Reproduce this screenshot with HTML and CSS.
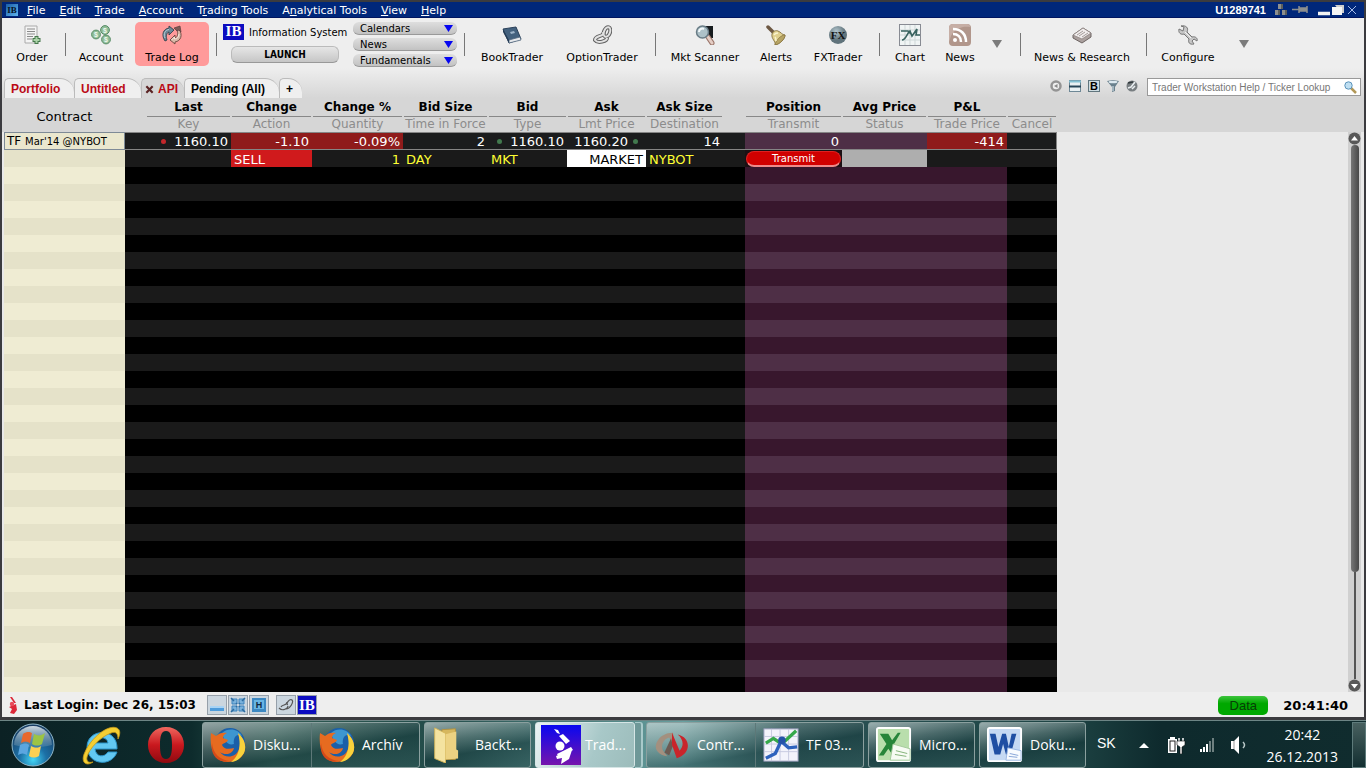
FILE: index.html
```html
<!DOCTYPE html>
<html lang="en">
<head>
<meta charset="utf-8">
<title>Trader Workstation</title>
<link rel="stylesheet" href="styles.css">
</head>
<body>
<div class="window">
  <header class="menubar">
    <svg class="app-icon" viewBox="0 0 12 12"><defs><linearGradient id="ap" x2="1" y2="1"><stop stop-color="#1b5ea8"/><stop offset="1" stop-color="#5fb4ee"/></linearGradient></defs><rect width="12" height="12" fill="url(#ap)"/><text x="6" y="9" text-anchor="middle" font-family="Liberation Serif, serif" font-weight="bold" font-size="9" fill="#061325">IB</text></svg>
    <nav class="menus">
      <a href="#"><u>F</u>ile</a><a href="#"><u>E</u>dit</a><a href="#"><u>T</u>rade</a><a href="#"><u>A</u>ccount</a><a href="#">T<u>r</u>ading Tools</a><a href="#">A<u>n</u>alytical Tools</a><a href="#"><u>V</u>iew</a><a href="#"><u>H</u>elp</a>
    </nav>
    <span class="user">U1289741</span>
    <svg class="tray-ic" viewBox="0 0 36 14"><g fill="#8d8f8e"><rect x="4" y="1" width="5" height="5"/><rect x="1" y="7" width="5" height="5"/><rect x="8" y="7" width="5" height="5"/></g><g fill="#5d5f5c"><rect x="7" y="1" width="2" height="5"/><rect x="4" y="7" width="2" height="5"/><rect x="11" y="7" width="2" height="5"/></g><path d="M18 6.500h7M25 3v7M26 5h6v3h-6zM33 3v7" stroke="#8d8f8e" stroke-width="1.500" fill="#8d8f8e"/></svg>
    <button class="winbtn" aria-label="Minimize"><svg viewBox="0 0 12 12"><path d="M0 9.500h12" stroke="#f2f2f2" stroke-width="3.500"/></svg></button>
    <button class="winbtn" aria-label="Restore"><svg viewBox="0 0 12 12"><path d="M3 1h9v8H9" fill="#ccc"/><rect x="0" y="3" width="10" height="8" fill="#f5f5f5"/></svg></button>
    <button class="winbtn" aria-label="Close"><svg viewBox="0 0 12 12"><path d="M2 2l8 8M10 2l-8 8" stroke="#a5bbe6" stroke-width="1"/></svg></button>
  </header>

  <div class="toolbar">
    <button class="tool"><svg viewBox="0 0 20 20"><path d="M3 1h12v17H3z" fill="#f4f4f4" stroke="#aaa"/><path d="M5 4h8M5 6.500h8M5 9h8M5 11.500h6M5 14h5" stroke="#8a8a8a"/><path d="M14.500 11v8M10.500 15h8" stroke="#46784c" stroke-width="4"/><path d="M14.500 12v6M11.500 15h6" stroke="#abd3a8" stroke-width="2"/></svg><span>Order</span></button>
    <i class="sep"></i>
    <button class="tool"><svg viewBox="0 0 20 20"><g fill="#90bd98" stroke="#568b65"><circle cx="5" cy="9.500" r="4.400"/><circle cx="14" cy="5" r="4.400"/><circle cx="15" cy="14.500" r="4.400"/></g><g font-family="Liberation Sans, sans-serif" font-size="7" font-weight="bold" fill="#eef8ef" text-anchor="middle"><text x="5" y="12">$</text><text x="14" y="7.500">$</text><text x="15" y="17">$</text></g></svg><span>Account</span></button>
    <button class="tool active"><svg viewBox="0 0 20 20"><path d="M3 16C-1 10 1 4 7 3l0-2 5 4-5 5V7C4 8 4 12 5 15z" fill="#6b8796" stroke="#35424d" stroke-width=".9"/><path d="M3 13C1 9 3 5 7 4.500" fill="none" stroke="#b9d0da"/><path d="M17 4c4 6 2 12-4 13v2l-5-4 5-5v3c3-1 3-5 2-8z" fill="#d9b9a8" stroke="#69463f" stroke-width=".9"/><path d="M12 3l6-2 1 6-2-2-2 1z" fill="#7e5a57" stroke="#5b3b3b" stroke-width=".7"/><path d="M9.500 15l3-3v2c3 0 4-2 4.500-5" fill="none" stroke="#f6e9df"/></svg><span>Trade Log</span></button>
    <i class="sep"></i>
    <div class="info">
      <div class="info-title"><b class="ib">IB</b><span>Information System</span></div>
      <button class="launch">LAUNCH</button>
    </div>
    <div class="drops">
      <div class="drop"><select aria-label="Calendars"><option>Calendars</option></select></div>
      <div class="drop"><select aria-label="News"><option>News</option></select></div>
      <div class="drop"><select aria-label="Fundamentals"><option>Fundamentals</option></select></div>
    </div>
    <i class="sep"></i>
    <button class="tool"><svg viewBox="0 0 20 20"><path d="M1 4l13-2 5 12-12 4z" fill="#43617e" stroke="#2a4059"/><path d="M7 15l11-3 1 3-12 3z" fill="#e7e9ec" stroke="#52677d" stroke-width=".8"/><path d="M1 4l6 11v3L1 7z" fill="#243c56"/><path d="M8 7l4-1 1 2-4 1z" fill="#9eb4c9"/></svg><span>BookTrader</span></button>
    <button class="tool"><svg viewBox="0 0 20 20"><g fill="none" stroke="#636363" stroke-width="4"><ellipse cx="15" cy="7" rx="3" ry="5" transform="rotate(20 15 7)"/><path d="M11 7c2 5-8 3-8 8 3 4 12 1 12-2"/></g><g fill="none" stroke="#e2e2e2" stroke-width="2"><ellipse cx="15" cy="7" rx="3" ry="5" transform="rotate(20 15 7)"/><path d="M11 7c2 5-8 3-8 8 3 4 12 1 12-2"/></g></svg><span>OptionTrader</span></button>
    <i class="sep"></i>
    <button class="tool"><svg viewBox="0 0 20 20"><path d="M10 1h8v12h-6z" fill="#161b1e"/><path d="M13 12l4 6" stroke="#9a7569" stroke-width="5" stroke-linecap="round"/><path d="M13 12l4 6" stroke="#e4cdc4" stroke-width="3" stroke-linecap="round"/><circle cx="7.500" cy="7" r="6" fill="#adc1c8" stroke="#697c86" stroke-width="1.500"/><path d="M4 7c0-3 3-4 5-3" stroke="#f2f8fa" stroke-width="2" fill="none"/></svg><span>Mkt Scanner</span></button>
    <button class="tool"><svg viewBox="0 0 20 20"><path d="M2 2l5 5" stroke="#6d5843" stroke-width="3.500" stroke-linecap="round"/><path d="M6 9c1-3 4-4 6-3 3 1 4 4 7 4 0 4-5 9-10 10 1-4-4-6-3-11z" fill="#e0d08f" stroke="#84713e" stroke-width=".9"/><path d="M19 10c-4 0-9 5-10 10 5-1 10-6 10-10z" fill="#b7a464" stroke="#84713e" stroke-width=".7"/><path d="M8 10c1-2 2-2 4-2M9 12c1 1 1 2 1 4" stroke="#faf4cf" stroke-width="1.500" fill="none"/></svg><span>Alerts</span></button>
    <button class="tool"><svg viewBox="0 0 20 20"><defs><radialGradient id="fx" cx=".4" cy=".3"><stop stop-color="#b3c6ce"/><stop offset="1" stop-color="#60737b"/></radialGradient></defs><circle cx="10" cy="10" r="9" fill="url(#fx)"/><text x="10" y="14" text-anchor="middle" font-family="Liberation Serif, serif" font-weight="bold" font-size="11" fill="#111">FX</text></svg><span>FXTrader</span></button>
    <i class="sep"></i>
    <button class="tool"><svg class="big" viewBox="0 0 22 22"><rect x=".5" y=".5" width="21" height="21" fill="#f0f4f4" stroke="#888b93"/><path d="M1 6h20M1 11h20M1 16h20M6 1v20M11 1v20M16 1v20" stroke="#ced7d7"/><path d="M2 7h7l3 3M3 16c4 0 5-7 8-9l2 5 5-7-1 6h4" stroke="#39635f" stroke-width="1.600" fill="none"/></svg><span>Chart</span></button>
    <button class="tool"><svg class="big" viewBox="0 0 22 22"><rect width="22" height="22" rx="4" fill="#b1968b"/><path d="M2 12C6 4 14 2 21 3v-1c0-1-1-2-3-2H4C1 0 0 2 0 4v14z" fill="#c6aea5"/><circle cx="6" cy="16" r="2" fill="#fff"/><path d="M4 10c5 0 8 3 8 8M4 5c8 0 13 5 13 13" stroke="#fff" stroke-width="2.500" fill="none"/></svg><span>News</span></button>
    <button class="more" aria-label="More news tools"></button>
    <i class="sep"></i>
    <button class="tool"><svg viewBox="0 0 20 20"><path d="M1 10l10-7 8 5v4l-9 6-9-5z" fill="#aaa09e" stroke="#6d6462"/><path d="M1 10l10-7 8 5-9 6z" fill="#f1eded" stroke="#867c7a" stroke-width=".7"/><path d="M5 10l6-4M7 11l6-4M10 12l6-4" stroke="#a39b99"/></svg><span>News &amp; Research</span></button>
    <i class="sep"></i>
    <button class="tool"><svg viewBox="0 0 20 20"><path d="M1 4l4 2 1-4-3-1c5-1 8 2 6 6l5 5c4-1 6 2 5 4l-3-2-2 2 2 3c-5 1-6-2-5-5L6 9C3 10 0 8 1 4z" fill="#c7c7c7" stroke="#767676"/><path d="M7 7l6 6" stroke="#f3f3f3"/></svg><span>Configure</span></button>
    <button class="more" aria-label="More settings"></button>
  </div>

  <div class="tabrow">
    <nav class="tabs">
      <a class="tab t1" href="#">Portfolio</a><a class="tab t2" href="#">Untitled</a><a class="tab t3" href="#"><svg viewBox="0 0 10 10"><path d="M1.500 1.500l7 7M8.500 1.500l-7 7" stroke="#5a2323" stroke-width="2.400"/></svg>API</a><a class="tab t4" href="#">Pending (All)</a><a class="tab t5" href="#">+</a>
    </nav>
    <div class="tab-tools">
      <svg viewBox="0 0 12 12"><circle cx="6" cy="6" r="4.500" fill="#eee" stroke="#949494" stroke-width="2.500"/><path d="M7.500 4v4L4 6z" fill="#888"/></svg>
      <svg viewBox="0 0 12 12"><rect x=".5" y=".5" width="11" height="11" fill="#e9f0f2" stroke="#6e8896"/><path d="M0 1.500h12" stroke="#84c0d2" stroke-width="2"/><path d="M0 6.500h12" stroke="#284658" stroke-width="2"/></svg>
      <svg viewBox="0 0 12 12"><rect x=".5" y=".5" width="11" height="11" fill="#cfdde2" stroke="#61767e"/><text x="6" y="10" text-anchor="middle" font-family="Liberation Sans, sans-serif" font-size="11" font-weight="bold" fill="#000">B</text></svg>
      <svg viewBox="0 0 12 12"><path d="M0 1l6-1 6 1-4 6v4l-3 1V7z" fill="#69808d"/><ellipse cx="6" cy="2" rx="4.500" ry="1.300" fill="#dce8ef"/><path d="M6 6v5" stroke="#dce8ef"/></svg>
      <svg viewBox="0 0 12 12"><circle cx="6" cy="6" r="5.500" fill="#777d80"/><path d="M2 8l3-1 4-5M6 9l3-3" stroke="#e9eef0" stroke-width="1.600" fill="none"/><path d="M2 3l5-1" stroke="#30383c" stroke-width="1.500"/></svg>
    </div>
    <div class="search"><input type="text" aria-label="Help and ticker lookup" placeholder="Trader Workstation Help / Ticker Lookup"><svg viewBox="0 0 13 13"><path d="M7 7l5 5" stroke="#b29858" stroke-width="2.500"/><circle cx="4.500" cy="4.500" r="3.700" fill="#bfdff2" stroke="#5b93ba"/></svg></div>
  </div>

  <main class="board">
    <div class="grid">
      <table>
        <colgroup><col class="c-name"><col class="c-gap"><col class="c85"><col class="c-chg"><col class="c-pct"><col class="c85"><col class="c79"><col class="c79"><col class="c-asz"><col class="c-gap2"><col class="c-pos"><col class="c85"><col class="c-pnl"><col class="c-cxl"></colgroup>
        <thead>
          <tr class="h1"><th rowspan="2" class="contract">Contract</th><td></td><th><span>Last</span></th><th><span>Change</span></th><th><span>Change %</span></th><th><span>Bid Size</span></th><th><span>Bid</span></th><th><span>Ask</span></th><th><span>Ask Size</span></th><td></td><th><span>Position</span></th><th><span>Avg Price</span></th><th><span>P&amp;L</span></th><th><span>&nbsp;</span></th></tr>
          <tr class="h2"><td></td><th>Key</th><th>Action</th><th>Quantity</th><th>Time in Force</th><th>Type</th><th>Lmt Price</th><th>Destination</th><td></td><th>Transmit</th><th>Status</th><th>Trade Price</th><th>Cancel</th></tr>
        </thead>
        <tbody>
          <tr class="quote"><th class="name" scope="row">TF <small>Mar'14 @NYBOT</small></th><td></td><td><i class="dot red"></i>1160.10</td><td class="loss">-1.10</td><td class="loss">-0.09%</td><td>2</td><td><i class="dot green"></i>1160.10</td><td>1160.20<i class="dot green after"></i></td><td>14</td><td></td><td class="plum">0</td><td class="plum"></td><td class="loss">-414</td><td class="last"></td></tr>
          <tr class="order"><th class="name alt"></th><td></td><td></td><td class="sell">SELL</td><td class="num">1</td><td>DAY</td><td>MKT</td><td class="market num">MARKET</td><td>NYBOT</td><td></td><td class="send"><button class="transmit">Transmit</button></td><td class="status"></td><td></td><td></td></tr>
        </tbody>
      </table>
      <div class="filler"><div class="s-cream"></div><div class="s-dark"></div><div class="s-plum"></div><div class="s-dark"></div></div>
    </div>
    <div class="scroll">
      <svg viewBox="0 0 13 13"><circle cx="6.500" cy="6.500" r="6" fill="#585858"/><path d="M3 8.500h7L6.500 4z" fill="#fff"/></svg>
      <div class="track"><div class="thumb"></div><div class="rail"></div></div>
      <svg viewBox="0 0 13 13"><circle cx="6.500" cy="6.500" r="6" fill="#585858"/><path d="M3 5h7L6.500 9.500z" fill="#fff"/></svg>
    </div>
  </main>

  <footer class="statusbar">
    <svg class="mark" viewBox="0 0 9 17"><path d="M1 0l2 0 4 6-2 0zM0 10l7-3 1 6-3 4-4-1 2-4z" fill="#dc2738"/><circle cx="3" cy="7" r="2.200" fill="#e8495a"/></svg>
    <b class="login">Last Login: Dec 26, 15:03</b>
    <div class="sbtns">
      <button aria-label="Minimize windows"><svg viewBox="0 0 16 16"><path d="M1 10h14v4H1z" fill="#4e9cdb"/><path d="M1 10h14" stroke="#a8d3f4" stroke-width="2"/></svg></button>
      <button aria-label="Arrange windows"><svg viewBox="0 0 16 16"><g stroke="#3c83bd" stroke-width="1" fill="#7ab2dc"><path d="M2 2h5v5H2zM9 2h5v5H9zM2 9h5v5H2zM9 9h5v5H9z"/></g><path d="M1 1l3 3M15 1l-3 3M1 15l3-3M15 15l-3-3M6 6l1 1M10 6L9 7M6 10l1-1M10 10L9 9" stroke="#2b6ba0" stroke-width="1.500"/></svg></button>
      <button aria-label="Hide windows"><svg viewBox="0 0 16 16"><rect x="1" y="1" width="14" height="14" fill="#3c88c2"/><rect x="3" y="3" width="10" height="9" fill="#68b5e3"/><text x="8" y="11" text-anchor="middle" font-family="Liberation Sans, sans-serif" font-size="9" font-weight="bold" fill="#102840">H</text></svg></button>
      <button class="gap" aria-label="Windows groups"><svg viewBox="0 0 16 16"><path d="M1 11c4 4 9 0 9-2M3 10c1-3 6-1 6-5M10 8c-3-1 2-7 4-5s-2 9-6 9" fill="none" stroke="#555" stroke-width="1.200"/></svg></button>
      <button class="ib" aria-label="Information system">IB</button>
    </div>
    <button class="data">Data</button>
    <b class="time">20:41:40</b>
  </footer>
</div>

<footer class="taskbar">
  <button class="pin orb" aria-label="Start"><svg viewBox="0 0 44 44"><defs><radialGradient id="orb" cx=".5" cy=".85" r=".8"><stop stop-color="#43d5f5"/><stop offset=".4" stop-color="#1c70a6"/><stop offset="1" stop-color="#183d63"/></radialGradient><linearGradient id="gl" x2="0" y2="1"><stop stop-color="#e2ebef" stop-opacity=".9"/><stop offset="1" stop-color="#7d9fb5" stop-opacity=".3"/></linearGradient></defs><circle cx="22" cy="22" r="21" fill="url(#orb)" stroke="#8fb6c8"/><path d="M3 22a19 19 0 0 1 38 0c-12 3-26 3-38 0z" fill="url(#gl)"/><path d="M12 11c4-3 7-2 9-1l-2 10c-3-2-6-2-9 0z" fill="#e8682c"/><path d="M23 11c4 2 7 2 11-1l-3 11c-3 2-7 2-10 0z" fill="#9cc444"/><path d="M9 22c4-2 7-2 9 0l-2 10c-3-2-6-2-9 0z" fill="#5ba6e0"/><path d="M20 23c4 2 7 2 10 0l-2 10c-4 2-7 2-10 0z" fill="#fbd052"/></svg></button>
  <button class="pin ie" aria-label="Internet Explorer"><svg viewBox="0 0 40 40"><path d="M36 24H14c1 8 9 9 13 3h9c-5 15-29 14-30-5C6 3 37 2 36 24zM14 18h13c-1-7-11-7-13 0z" fill="#62c8f2" stroke="#2a93c8"/><path d="M12 37C5 42-1 37 4 27 10 13 27-1 36 3c4 2 3 7 1 11 0-5-2-8-7-6C19 12 8 24 6 32c-1 5 2 6 6 5z" fill="#f4ce32" stroke="#c99a17" stroke-width=".8"/></svg></button>
  <button class="pin opera" aria-label="Opera"><svg viewBox="0 0 38 38"><defs><linearGradient id="op" x2="0" y2="1"><stop stop-color="#f0685f"/><stop offset=".5" stop-color="#c9181e"/><stop offset="1" stop-color="#8d0a10"/></linearGradient></defs><path fill-rule="evenodd" d="M19 1c11 0 18 8 18 18s-7 18-18 18S1 29 1 19 8 1 19 1zm0 4c-5 0-6 6-6 14s1 14 6 14 6-6 6-14-1-14-6-14z" fill="url(#op)"/></svg></button>

  <div class="group pair"><button class="task"><svg viewBox="0 0 36 36"><use href="#fox"/></svg><span>Disku...</span></button><button class="task"><svg viewBox="0 0 36 36"><g id="fox"><circle cx="20" cy="16" r="15" fill="#1b5fa8"/><path d="M12 6c6-6 17-4 20 3-7-4-9 4-8 8-6 2-10-3-12-11z" fill="#3d96d0"/><path d="M1 6l5 3c3-3 7-4 11-3-3 1-4 3-4 5l5 2c-1 3-5 3-6 5 2 5 8 4 12 3-1 6-9 8-14 4 5 7 16 6 19-3 2-6 1-11-1-15 6 4 9 12 6 19-3 6-9 9-16 9C6 35-1 24 1 6z" fill="#e66b20"/><path d="M28 6c6 5 9 13 6 20-3 5-8 9-13 9 7-5 11-15 7-29z" fill="#f8d23c"/><path d="M2 16c1 11 8 17 18 18C9 37 0 29 2 16z" fill="#d64a18"/></g></svg><span>Archív</span></button></div>
  <div class="group"><button class="task folder"><svg viewBox="0 0 36 40"><path d="M9 3l15-1v34H9z" fill="#d6b75e" stroke="#b3913c"/><path d="M1 1l12 6v33L1 35z" fill="#f4e3a0" stroke="#d4b658"/><path d="M13 8l12-3v20l2 1v9l-14 1z" fill="#ecd282"/></svg><span>Backt...</span></button></div>
  <div class="group on"><button class="task"><svg viewBox="0 0 40 40"><defs><linearGradient id="tw" x2="0" y2="1"><stop stop-color="#0808f0"/><stop offset="1" stop-color="#7614ac"/></linearGradient></defs><rect width="40" height="40" fill="url(#tw)"/><path d="M13 4l4 1 2 4-3-1zM18 11l4-2 7 7-4 3z" fill="#fff"/><path d="M15 31l16-6-3 9-8 5 1-6-5 1z" fill="#fff"/><path d="M16 29l14-7 2 3-14 8z" fill="#fff"/><circle cx="19" cy="21" r="4.500" fill="#fff"/></svg><span>Trad...</span></button></div>
  <i class="stack"></i>
  <div class="group pair"><button class="task"><svg viewBox="0 0 38 38"><path d="M14 31C5 30 1 24 2 19 4 11 11 6 20 6l3 18-7-13c-7 2-10 10-5 16z" fill="#a3907f"/><path d="M11 27l7-15 2 8-4 10z" fill="#6c5a52"/><path d="M19 6l8 19c5-5 4-12-2-17 14 3 15 20-1 25l-5-14z" fill="#c9252b"/></svg><span>Contr...</span></button><button class="task"><svg viewBox="0 0 38 38"><rect x="1" y="2" width="36" height="34" fill="#f3f3fb" stroke="#9fa2c2"/><path d="M1 10h36M1 18h36M1 26h36M9 2v34M18 2v34M27 2v34" stroke="#c7c9df"/><path d="M3 17l8-5 6 4 6-1 12-11" stroke="#36a84b" stroke-width="3.500" fill="none"/><path d="M3 33l10-5 6-13 8 7 9-1" stroke="#2e62bd" stroke-width="3.500" fill="none"/><circle cx="20" cy="14" r="4" fill="#2552a8"/></svg><span>TF 03...</span></button></div>
  <div class="group"><button class="task"><svg viewBox="0 0 38 38"><rect x="1" y="1" width="35" height="35" rx="2" fill="#b9deac" stroke="#fff" stroke-width="2"/><path d="M4 7h9l4 7 6-8h3l-7 12 8 12h-9l-5-7-5 7H3l8-12z" fill="#27853a"/><path d="M18 18l18 5v12H15z" fill="#f7fbf4" stroke="#a3c99a"/><path d="M21 25l12 3M20 29l12 2" stroke="#7fb074"/></svg><span>Micro...</span></button></div>
  <div class="group"><button class="task"><svg viewBox="0 0 38 38"><rect x="1" y="1" width="35" height="35" rx="2" fill="#c5d9f3" stroke="#fff" stroke-width="2"/><path d="M3 7h6l3 14 4-14h4l3 14 3-14h5l-6 22h-5l-3-11-3 11H8z" fill="#1f4fa3"/><path d="M22 22l14 3v10H20z" fill="#f8fbff" stroke="#9bb8e4"/><path d="M24 28l9 2M23 31l9 1" stroke="#83a2d6"/></svg><span>Doku...</span></button></div>

  <div class="tray">
    <span class="lang">SK</span>
    <svg class="up" viewBox="0 0 10 6"><path d="M0 6l5-5 5 5z" fill="#fff"/></svg>
    <svg class="bat" viewBox="0 0 20 18"><path d="M3 1h5v2h2v14H1V3h2z" fill="#fff"/><rect x="3" y="5" width="5" height="10" fill="#fff" stroke="#222"/><path d="M12 2v4M16 2v4" stroke="#fff" stroke-width="1.500"/><path d="M10 5h8v4l-3 2v7h-2v-7l-3-2z" fill="#fff" stroke="#111" stroke-width=".6"/></svg>
    <svg class="sig" viewBox="0 0 16 16"><path d="M1 12h2v3H1zM4 10h2v5H4zM7 7h2v8H7z" fill="#fff"/><path d="M10 4h2v11h-2zM13 1h2v14h-2z" fill="#6e8080"/></svg>
    <svg class="vol" viewBox="0 0 16 18"><path d="M1 5h3l5-5v18l-5-5H1z" fill="#fff"/><path d="M4 5v8" stroke="#999"/><path d="M13 6c2 2 2 4 0 6" stroke="#b9c8c8" stroke-width="1.500" fill="none"/></svg>
    <div class="clock"><span>20:42</span><span>26.12.2013</span></div>
    <button class="peek" aria-label="Show desktop"></button>
  </div>
</footer>
</body>
</html>
```
FILE: styles.css
```css
* { box-sizing: border-box; }

body {
  margin: 0;
  height: 100vh;
  display: flex;
  flex-direction: column;
  overflow: hidden;
  background: #3b3b3f;
  font-family: "DejaVu Sans", Verdana, sans-serif;
  font-size: 11px;
  color: #000;
}

button, select, input { font-family: inherit; color: inherit; margin: 0; padding: 0; border: 0; background: none; }
svg { display: block; flex: none; }
a { color: inherit; text-decoration: none; }

.window {
  flex: 1;
  min-height: 0;
  margin: 2px 2px 3px;
  display: flex;
  flex-direction: column;
  background: #eee;
}

/* Menu bar */
.menubar {
  height: 16px;
  display: flex;
  align-items: center;
  padding: 0 4px;
  background: #00277a;
  border-bottom: 1px solid #001560;
  color: #fff;
}
.app-icon { width: 12px; height: 12px; }
.menus { display: flex; gap: 14px; margin-left: 9px; padding-top: 2px; flex: 1; line-height: 15px; }
.user { font: bold 11px "Liberation Sans", Arial, sans-serif; margin-right: 8px; }
.tray-ic { width: 36px; height: 14px; margin-right: 8px; }
.winbtn { width: 14px; height: 14px; }
.winbtn svg { width: 12px; height: 12px; }

/* Toolbar */
.toolbar {
  height: 50px;
  padding-top: 4px;
  display: grid;
  grid-template-columns: 60px 6px 66px 76px 12px 128px 110px 8px 88px 92px 14px 86px 56px 68px 14px 48px 52px 22px 24px 100px 28px 56px 56px;
}
.tool {
  height: 44px;
  display: flex;
  flex-direction: column;
  align-items: center;
  font-size: 11px;
  line-height: 14px;
  white-space: nowrap;
  border-radius: 5px;
}
.tool svg { width: 20px; height: 20px; margin: 3px 0 6px; }
.tool svg.big { width: 22px; height: 22px; margin: 2px 0 5px; }
.tool.active { background: #ff9a9a; margin: 0 1px; }
.sep { justify-self: center; width: 1px; height: 23px; margin-top: 11px; background: #777; }
.more { justify-self: center; margin-top: 18px; width: 10px; height: 8px; background: #7b7b7b; clip-path: polygon(0 0, 100% 0, 50% 100%); }
.info-title { display: flex; align-items: center; gap: 5px; padding-left: 1px; height: 20px; font-size: 10px; white-space: nowrap; }
.ib { background: #0c0cc0; color: #fff; font-family: "Liberation Serif", serif; font-weight: bold; font-size: 15px; line-height: 15px; text-align: center; }
.info-title .ib { width: 21px; height: 16px; }
.launch {
  display: block;
  width: 108px;
  height: 17px;
  margin: 4px 0 0 9px;
  border: 1px solid #bbb;
  border-bottom-color: #999;
  border-radius: 6px;
  background: linear-gradient(#e6e6e6, #c6c6c6);
  font: bold 10px "DejaVu Sans Condensed", "DejaVu Sans", sans-serif;
}
.drops { display: flex; flex-direction: column; gap: 3px; padding: 0 3px; }
.drop { position: relative; height: 13px; border-radius: 6px; background: linear-gradient(#dedede, #c2c2c2); border-bottom: 1px solid #999; }
.drop select { appearance: none; display: block; width: 100%; height: 13px; padding: 1px 0 0 7px; font-size: 10px; line-height: 12px; }
.drop::after { content: ""; position: absolute; right: 4px; top: 3px; width: 9px; height: 7px; background: #0606f0; clip-path: polygon(0 0, 100% 0, 50% 100%); pointer-events: none; }

/* Tabs */
.tabrow {
  height: 30px;
  padding: 10px 3px 0 2px;
  display: flex;
  background: linear-gradient(#eee, #d6d6d6);
}
.tabs { display: flex; flex: 1; font: bold 12px "Liberation Sans", Arial, sans-serif; }
.tab {
  height: 21px;
  line-height: 20px;
  padding-left: 7px;
  background: #efefef;
  border: 1px solid #bbb;
  border-width: 1px 0 0 1px;
  border-radius: 5px 14px 0 0;
  white-space: nowrap;
}
.t1, .t2, .t3 { color: #bb0a16; }
.t1 { width: 70px; padding-left: 6px; }
.t2 { width: 67px; padding-left: 6px; }
.t3 { width: 43px; padding-left: 3px; display: flex; align-items: center; gap: 4px; background: #d6d6d6; }
.t3 svg { width: 9px; height: 9px; }
.t4 { width: 95px; padding-left: 6px; }
.t5 { width: 23px; padding-left: 6px; }
.tab-tools { display: flex; gap: 7px; padding-top: 2px; margin-right: 9px; }
.tab-tools svg { width: 12px; height: 12px; }
.search { width: 214px; height: 18px; display: flex; align-items: center; background: #fff; border: 1px solid #999; padding: 0 3px 0 4px; }
.search input { flex: 1; min-width: 0; font: 10px "Liberation Sans", Arial, sans-serif; outline: 0; }
.search input::placeholder { color: #777; opacity: 1; }
.search svg { width: 13px; height: 13px; }

/* Quote grid */
.board {
  flex: 1;
  min-height: 0;
  display: flex;
  justify-content: space-between;
  padding: 0 3px 0 2px;
  background: linear-gradient(#d6d6d6 34px, #e9e9e9 34px);
}
.grid { width: 1053px; display: flex; flex-direction: column; overflow: hidden; }
table { table-layout: fixed; width: 1053px; border-collapse: separate; border-spacing: 0; font-size: 13px; line-height: 15px; }
th, td { padding: 0; white-space: nowrap; overflow: hidden; }
.c-name { width: 121px; }
.c-gap { width: 21px; }
.c85 { width: 85px; }
.c79 { width: 79px; }
.c-chg { width: 81px; }
.c-pct { width: 91px; }
.c-asz { width: 77px; }
.c-gap2 { width: 22px; }
.c-pos { width: 97px; }
.c-pnl { width: 80px; }
.c-cxl { width: 50px; }
thead { font-size: 12px; }
thead th span { display: block; height: 19px; margin: 0 1px; line-height: 19px; border-bottom: 1px solid #888; }
.h1 { height: 19px; }
.h2 { height: 15px; }
.h2 th { color: #8c8c8c; font-weight: normal; }
thead .contract { font-weight: normal; font-size: 13px; padding-top: 2px; }
tbody td { height: 17px; padding: 2px 3px 0; line-height: 14px; }
.quote td { text-align: right; color: #fff; background: #1b1c1d; border: 1px solid #858585; border-width: 1px 0; }
.quote td.loss { background: #8f1b1b; }
.quote td.plum { background: #4e2f46; }
.quote td.last { border-right-width: 1px; }
tbody .name { text-align: left; font-weight: normal; font-size: 12px; line-height: 14px; height: 17px; background: #eae7ce; border: 1px solid #7e8a96; padding: 1px 0 0 2px; }
.name small { font-size: 10px; }
tbody .name.alt { border: 0; background: #e5e2c9; }
.order td { background: #1a1a1a; color: #ff3; text-align: left; }
.order td.num { text-align: right; }
.order td.sell { background: #d01a1c; color: #fff; }
.order td.market { background: #fff; color: #000; }
.order td.status { background: #aeaeae; }
.order td.send { background: #1b1014; padding: 0 1px; }
.quote td { padding-top: 1px; }
.dot { display: inline-block; width: 5px; height: 5px; border-radius: 50%; margin-right: 8px; vertical-align: 2px; }
.dot.after { margin: 0 5px; }
.dot.red { background: #c3272b; }
.dot.green { background: #42794e; }
.transmit {
  display: block;
  width: 100%;
  height: 16px;
  border-radius: 8px;
  background: #d00000;
  border: 1px solid #e02020;
  border-bottom: 2px solid #ee8a8a;
  color: #fff;
  font-size: 10px;
  line-height: 13px;
}
.filler { flex: 1; min-height: 0; display: grid; grid-template-columns: 121px 620px 262px 50px; }
.s-cream { background: repeating-linear-gradient(#efecd3 0 17px, #e5e2c9 17px 34px); }
.s-dark { background: repeating-linear-gradient(#000 0 17px, #1a1a1a 17px 34px); }
.s-plum { background: repeating-linear-gradient(#38172d 0 17px, #4e2f46 17px 34px); }
.scroll { width: 13px; margin-top: 34px; display: flex; flex-direction: column; background: #d0d0d0; }
.scroll svg { width: 13px; height: 13px; }
.track { flex: 1; display: flex; flex-direction: column; align-items: center; }
.thumb { flex: 4; width: 8px; border-radius: 4px; background: linear-gradient(90deg, #777, #484848); }
.rail { flex: 1; width: 2px; background: #555; }

/* Status bar */
.statusbar { height: 25px; padding: 1px 16px 0 7px; display: flex; align-items: center; font-size: 12px; }
.mark { width: 9px; height: 17px; margin-right: 6px; }
.sbtns { display: flex; gap: 1px; margin-left: 11px; flex: 1; }
.sbtns button { width: 20px; height: 20px; padding: 1px; border: 1px solid #96a0aa; background: #cbd6df; }
.sbtns button svg { width: 16px; height: 16px; }
.sbtns button.gap { margin-left: 6px; }
.sbtns button.ib { background: #0c0cc0; }
.data { width: 50px; height: 19px; border-radius: 5px; background: linear-gradient(#3dc43d, #00a800 40%); color: #063d06; font: 13px "Liberation Sans", Arial, sans-serif; }
.time { font-size: 13px; margin-left: 15px; }

/* Taskbar */
.taskbar {
  height: 48px;
  display: flex;
  align-items: center;
  border-top: 1px solid #6d8585;
  background: linear-gradient(90deg, #0b2124, #0d2b2c 14%, #2f5a52 20%, #234c4a 32%, #68a0a0 50%, #2b5355 58%, #1e4444 78%, #0e2a2d 85%, #102c2e);
  color: #fff;
  font: 14px "Open Sans", "Noto Sans", sans-serif;
}
.pin svg { width: 44px; height: 44px; }
.pin.orb { margin-left: 11px; }
.pin.ie { margin-left: 26px; }
.pin.ie svg { width: 40px; height: 40px; }
.pin.opera { margin: 0 17px 0 26px; }
.pin.opera svg { width: 38px; height: 38px; }
.group {
  height: 46px;
  display: flex;
  margin-right: 4px;
  border: 1px solid #8ba09f;
  border-radius: 3px;
  background: linear-gradient(170deg, rgba(215, 225, 225, .65), rgba(130, 150, 150, .4) 35%, rgba(20, 55, 58, .45) 60%, rgba(50, 90, 90, .5));
}
.group.on { background: linear-gradient(110deg, #eaf3f3, #a8c8c8 60%, #9cbcbb); margin-right: 0; border-color: #d5e5e5; }
.task { width: 105px; height: 44px; padding-left: 7px; display: flex; align-items: center; gap: 7px; font-size: 14px; text-align: left; white-space: nowrap; }
.pair .task { width: 108px; }
.task + .task { border-left: 1px solid #5d7878; }
.task svg { width: 36px; height: 36px; }
.on .task { width: 98px; padding-left: 5px; gap: 4px; }
.on .task svg { width: 40px; height: 40px; }
.stack { width: 8px; height: 46px; margin-right: 3px; border: solid #a9caca; border-width: 1px 2px 1px 0; background: #6e9898; border-radius: 0 3px 3px 0; }
.tray { flex: 1; display: flex; align-items: center; justify-content: flex-end; }
.lang { margin-right: 23px; font: 14px "Liberation Sans", Arial, sans-serif; padding-bottom: 4px; }
.up { width: 10px; height: 6px; margin-right: 18px; }
.bat { width: 20px; height: 18px; margin-right: 12px; }
.sig { width: 16px; height: 16px; margin-right: 15px; }
.vol { width: 16px; height: 18px; margin-right: 21px; }
.clock { display: flex; flex-direction: column; align-items: center; line-height: 22px; margin-right: 14px; padding-top: 2px; }
.peek { width: 14px; height: 46px; border: 1px solid #5e7b7b; background: linear-gradient(#48605f, #132f31); }
```
